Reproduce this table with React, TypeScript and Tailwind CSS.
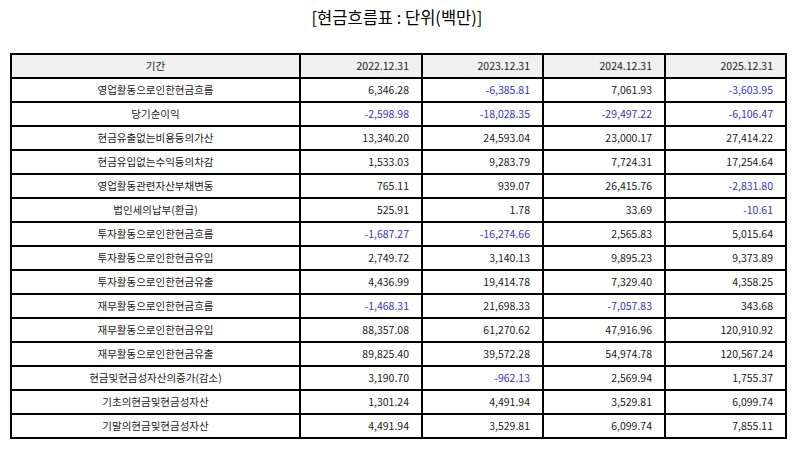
const COLUMNS = ['2022.12.31', '2023.12.31', '2024.12.31', '2025.12.31']

const ROWS: [string, string[]][] = [
  ['영업활동으로인한현금흐름', ['6,346.28', '-6,385.81', '7,061.93', '-3,603.95']],
  ['당기순이익', ['-2,598.98', '-18,028.35', '-29,497.22', '-6,106.47']],
  ['현금유출없는비용등의가산', ['13,340.20', '24,593.04', '23,000.17', '27,414.22']],
  ['현금유입없는수익등의차감', ['1,533.03', '9,283.79', '7,724.31', '17,254.64']],
  ['영업활동관련자산부채변동', ['765.11', '939.07', '26,415.76', '-2,831.80']],
  ['법인세의납부(환급)', ['525.91', '1.78', '33.69', '-10.61']],
  ['투자활동으로인한현금흐름', ['-1,687.27', '-16,274.66', '2,565.83', '5,015.64']],
  ['투자활동으로인한현금유입', ['2,749.72', '3,140.13', '9,895.23', '9,373.89']],
  ['투자활동으로인한현금유출', ['4,436.99', '19,414.78', '7,329.40', '4,358.25']],
  ['재무활동으로인한현금흐름', ['-1,468.31', '21,698.33', '-7,057.83', '343.68']],
  ['재무활동으로인한현금유입', ['88,357.08', '61,270.62', '47,916.96', '120,910.92']],
  ['재무활동으로인한현금유출', ['89,825.40', '39,572.28', '54,974.78', '120,567.24']],
  ['현금및현금성자산의증가(감소)', ['3,190.70', '-962.13', '2,569.94', '1,755.37']],
  ['기초의현금및현금성자산', ['1,301.24', '4,491.94', '3,529.81', '6,099.74']],
  ['기말의현금및현금성자산', ['4,491.94', '3,529.81', '6,099.74', '7,855.11']],
]

const FONT = { fontFamily: '"Noto Sans CJK KR", "Noto Sans", sans-serif' }

export default function App() {
  return (
    <div className="w-[794px] h-[452px] bg-white text-[#1a1a1a]" style={FONT}>
      <h1 className="h-[37px] pt-[5px] text-center text-[16.5px] leading-[24px] text-black">
        [현금흐름표 : 단위(백만)]
      </h1>
      <div className="pt-[16px] pl-[10px]">
        <table className="w-[775px] table-fixed border-collapse text-[10.5px]">
          <colgroup>
            <col className="w-[289px]" />
            <col className="w-[122px]" />
            <col className="w-[121px]" />
            <col className="w-[122px]" />
            <col className="w-[121px]" />
          </colgroup>
          <thead>
            <tr className="h-[24px] bg-[#f0f0f0]">
              <th className="border-2 border-black text-center font-normal">기간</th>
              {COLUMNS.map(c => (
                <th key={c} className="border-2 border-black pr-[12px] text-right font-normal">{c}</th>
              ))}
            </tr>
          </thead>
          <tbody>
            {ROWS.map(([label, values]) => (
              <tr key={label} className="h-[24px]">
                <td className="border-2 border-black text-center">{label}</td>
                {values.map((v, i) => (
                  <td key={i} className={`border-2 border-black pr-[12px] text-right ${v.startsWith('-') ? 'text-[#3535c8]' : ''}`}>
                    {v}
                  </td>
                ))}
              </tr>
            ))}
          </tbody>
        </table>
      </div>
    </div>
  )
}
